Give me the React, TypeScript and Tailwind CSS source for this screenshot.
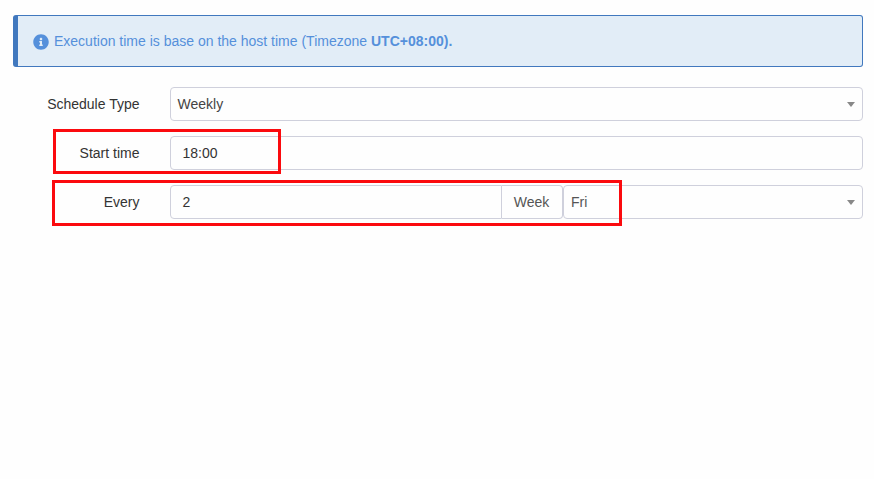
import type { ReactNode } from 'react';
import { FaInfoCircle } from 'react-icons/fa';

function Caret() {
  return (
    <span className="ml-auto mr-[7px] h-0 w-0 border-x-4 border-t-[5px] border-x-transparent border-t-[#888888]" />
  );
}

function Row({ label, children }: { label: string; children: ReactNode }) {
  return (
    <div className="flex h-[34px] items-center">
      <label className="w-[127px] pr-[0.5px] text-right text-[#333333]">{label}</label>
      <div className="ml-[30px] flex h-full flex-1">{children}</div>
    </div>
  );
}

function Highlight({ className }: { className: string }) {
  return <div className={`pointer-events-none absolute border-3 border-[#fb0a0e] ${className}`} />;
}

export default function App() {
  return (
    <main className="relative h-[479px] w-[874px] bg-[#fefefe] pl-[13px] pr-[11px] pt-[15px] font-['Liberation_Sans',Arial,sans-serif] text-[14px] leading-5 text-[#333333]">
      <div className="flex h-[52px] items-center rounded-[3px] border border-l-5 border-[#4178be] bg-[#e2edf7] pl-[15px] text-[#5590db]">
        <FaInfoCircle className="mt-[2px] mr-[5px] h-4 w-4" />
        <p>
          Execution time is base on the host time (Timezone <b>UTC+08:00).</b>
        </p>
      </div>

      <form className="mt-5 flex flex-col gap-[15px]">
        <Row label="Schedule Type">
          <div className="flex flex-1 items-center rounded border border-[#cfd0dc] pl-[6.5px] text-[#444444]">
            Weekly
            <Caret />
          </div>
        </Row>
        <Row label="Start time">
          <div className="flex flex-1 items-center rounded border border-[#cfd0dc] pl-[11.5px]">18:00</div>
        </Row>
        <Row label="Every">
          <div className="flex w-[332px] items-center rounded-l border border-[#cfd0dc] pl-[11.5px]">2</div>
          <div className="flex w-[61px] items-center justify-center rounded-r border border-l-0 border-[#cfd0dc] pr-px text-[#555555]">
            Week
          </div>
          <div className="flex flex-1 items-center rounded border border-[#cfd0dc] pl-[7px] text-[#555555]">
            Fri
            <Caret />
          </div>
        </Row>
      </form>

      <Highlight className="left-[53px] top-[129px] h-[45px] w-[228px]" />
      <Highlight className="left-[52px] top-[180px] h-[46px] w-[570px]" />
    </main>
  );
}
